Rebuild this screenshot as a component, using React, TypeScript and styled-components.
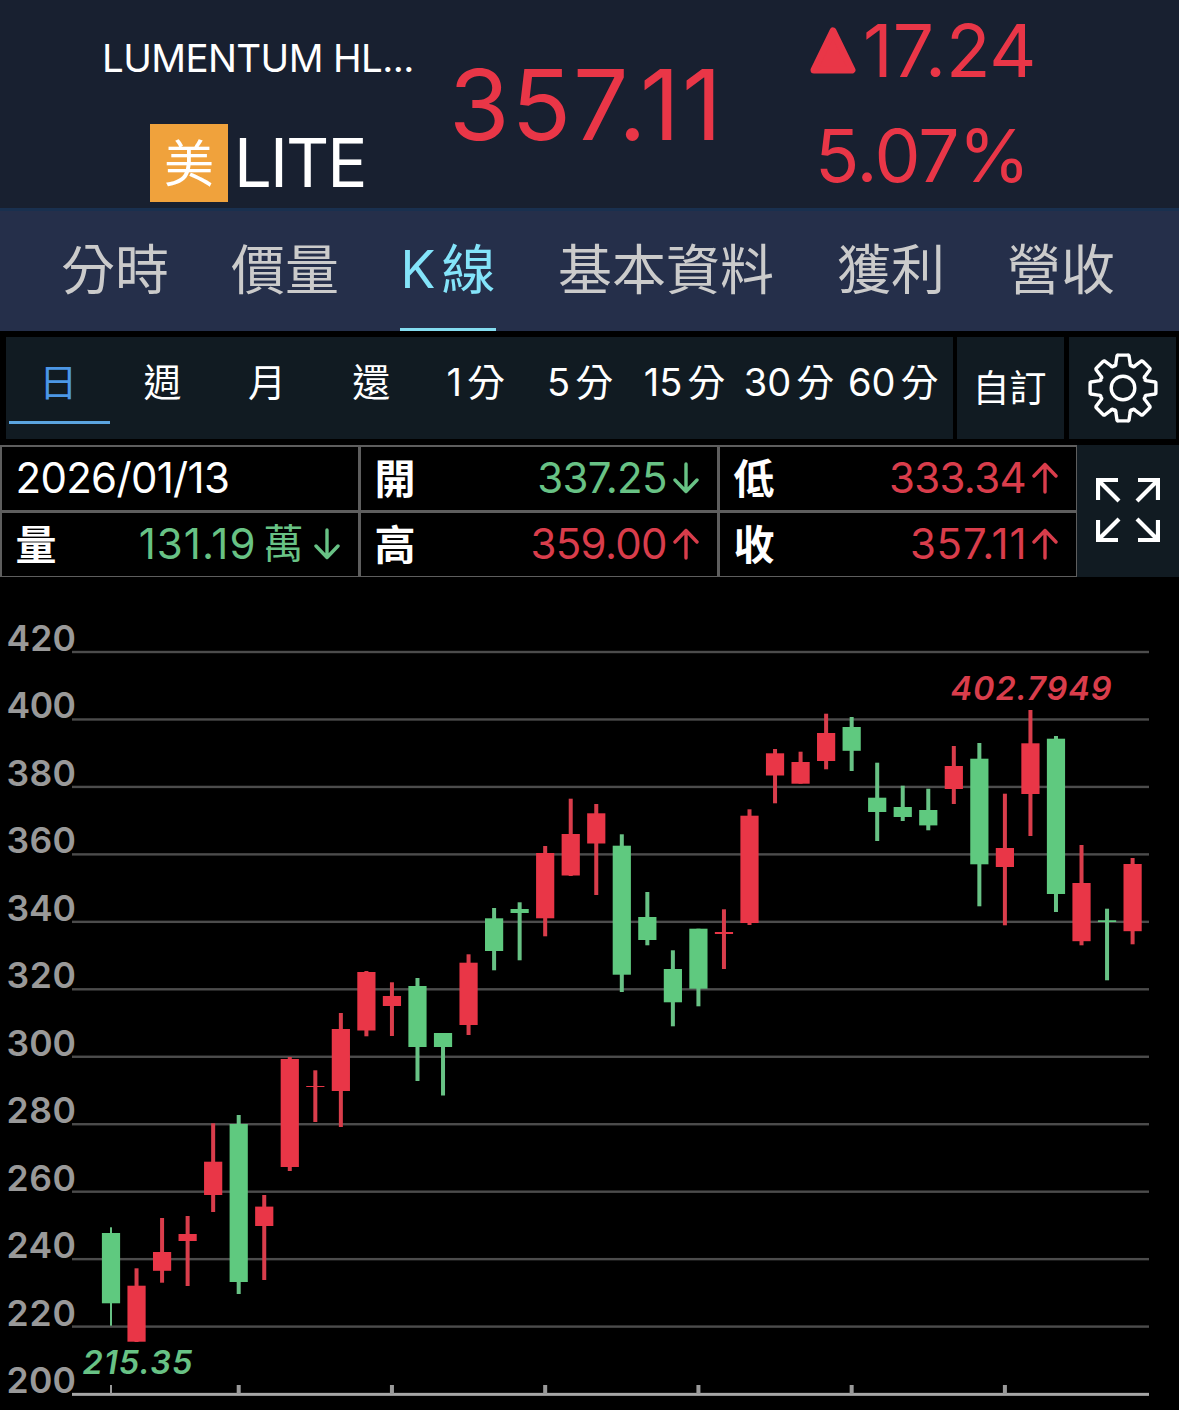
import React from "react";
import styled, { createGlobalStyle } from "styled-components";

const RED = "#e93647";
const GREEN = "#5fc97f";

const GlobalStyle = createGlobalStyle`
  html, body { margin: 0; padding: 0; background: #000; }
  * { box-sizing: border-box; }
  body {
    font-family: Inter, "Noto Sans CJK TC", sans-serif;
    color: #fff;
    overflow: hidden;
  }
`;

const Screen = styled.main`
  display: flex;
  flex-direction: column;
  width: 1179px;
  height: 1410px;
  background: #000;
`;

const Header = styled.header`
  display: grid;
  grid-template-columns: 430px 310px 1fr;
  height: 208px;
  background: #182030;
`;

const Identity = styled.div`
  display: flex;
  flex-direction: column;
  padding: 38px 0 0 102px;
`;

const CompanyName = styled.div`
  font-size: 38.5px;
  line-height: 41px;
  letter-spacing: -0.6px;
  white-space: nowrap;
`;

const TickerRow = styled.div`
  display: flex;
  align-items: center;
  gap: 6px;
  margin: 45px 0 0 48px;
`;

const MarketBadge = styled.span`
  display: flex;
  align-items: center;
  justify-content: center;
  width: 78px;
  height: 78px;
  background: #f0a23c;
  font-size: 50px;
  line-height: 76px;
  padding-top: 2px;
`;

const Ticker = styled.span`
  font-size: 67px;
  line-height: 78px;
  letter-spacing: -2px;
`;

const Price = styled.div`
  padding: 45px 0 0 19px;
  font-size: 98px;
  line-height: 119px;
  letter-spacing: 2px;
  color: ${RED};
  white-space: nowrap;
`;

const Change = styled.div`
  display: flex;
  flex-direction: column;
  gap: 25px;
  padding-top: 11px;
  color: ${RED};
`;

const ChangeLine = styled.div<{ $left: number; $track: number }>`
  display: flex;
  align-items: center;
  gap: 7px;
  padding-left: ${(p) => p.$left}px;
  font-size: 73px;
  line-height: 80px;
  letter-spacing: ${(p) => p.$track}px;
  white-space: nowrap;
`;

const Tabs = styled.nav`
  display: flex;
  gap: 62px;
  height: 123px;
  padding-left: 61px;
  border-top: 3px solid #19304f;
  background: #252f4a;
`;

const Tab = styled.a<{ $active?: boolean }>`
  flex: none;
  display: flex;
  justify-content: center;
  gap: 6px;
  width: ${(p) => (p.$active ? "96px" : "auto")};
  margin-left: ${(p) => (p.$active ? -1 : 0)}px;
  font-size: 54px;
  line-height: 120px;
  color: ${(p) => (p.$active ? "#84e4fa" : "#cbcbcb")};
  border-bottom: 3px solid ${(p) => (p.$active ? "#84dcf0" : "transparent")};

  &:nth-child(n + 5) {
    transform: translateX(1px);
  }
`;

const TabLatin = styled.span`
  font-size: 52px;
  line-height: 117px;
`;

const Toolbar = styled.div`
  display: grid;
  grid-template-columns: 951px 112px 107px;
  height: 114px;
  padding: 6px 3px 8px 6px;
`;

const Periods = styled.div`
  display: grid;
  grid-template-columns: repeat(9, 104.4px);
  width: 947px;
  background: #111b22;
  height: 102px;
`;

const Period = styled.a<{ $active?: boolean }>`
  display: flex;
  justify-content: center;
  gap: 5px;
  margin-left: 3px;
  padding-right: 3px;
  height: 87px;
  font-size: 38px;
  line-height: 91px;
  white-space: nowrap;
  color: ${(p) => (p.$active ? "#4c97e6" : "#fff")};
  border-bottom: 3px solid ${(p) => (p.$active ? "#5ba5e0" : "transparent")};
`;

const ToolButton = styled.button`
  display: flex;
  align-items: center;
  justify-content: center;
  width: 107px;
  height: 102px;
  padding: 0;
  border: 0;
  background: #111b22;
  color: #fff;
  font: 400 37px/104px Inter, "Noto Sans CJK TC", sans-serif;
`;

const CustomLabel = styled.span`
  padding: 2px 2px 0 0;
`;

const QuotePanel = styled.section`
  display: grid;
  grid-template-columns: 1077px 1fr;
  height: 132px;
`;

const QuoteGrid = styled.div`
  display: grid;
  grid-template-columns: repeat(3, 356px);
  grid-template-rows: repeat(2, 63px);
  gap: 3px;
  padding: 1.5px;
  background: #5e5e5e;
`;

const QuoteCell = styled.div`
  display: flex;
  align-items: center;
  justify-content: space-between;
  padding: 0 18px 0 14px;
  background: #000;
  font-size: 42px;
  line-height: 62px;
`;

const DateText = styled.span`
  letter-spacing: -0.7px;
`;

const CellLabel = styled.span`
  font-weight: 700;
  font-size: 41px;
  line-height: 62px;
  padding-top: 1px;
`;

const CellValue = styled.span<{ $up: boolean }>`
  display: flex;
  align-items: center;
  color: ${(p) => (p.$up ? "#d93d4b" : "#68c285")};
`;

const Amount = styled.span<{ $track: number }>`
  letter-spacing: ${(p) => p.$track}px;
  margin-right: ${(p) => 5 - p.$track}px;
`;

const Unit = styled.span`
  font-size: 40px;
  margin: 0 10px 0 3px;
`;

const ExpandButton = styled(ToolButton)`
  width: 102px;
  height: 132px;
  padding: 0 0 2px;
`;

const Chart = styled.svg`
  display: block;
  width: 1179px;
  height: 833px;
  font-family: Inter, sans-serif;
`;

const Arrow = ({ up }: { up: boolean }) => (
  <svg width="26" height="32" viewBox="0 0 26 32" fill="none" stroke="currentColor" strokeWidth="3.4" strokeLinecap="round" strokeLinejoin="round">
    {up ? <path d="M13 30V2.5M2 14L13 2.5L24 14" /> : <path d="M13 2V29.5M2 18L13 29.5L24 18" />}
  </svg>
);

const GEAR_TEETH = Array.from({ length: 8 }, (_, i) => i * 45);

const gearPath = () => {
  const pt = (r: number, deg: number) => {
    const a = ((deg - 90) * Math.PI) / 180;
    return `${(36 + r * Math.cos(a)).toFixed(2)} ${(36 + r * Math.sin(a)).toFixed(2)}`;
  };
  const parts = GEAR_TEETH.map(
    (d, i) =>
      `${i === 0 ? "M" : "L"}${pt(25.8, d - 16)} L${pt(32.8, d - 10.5)} Q${pt(33.6, d - 9.5)} ${pt(33.2, d - 8)} L${pt(33.2, d + 8)} Q${pt(33.6, d + 9.5)} ${pt(32.8, d + 10.5)} L${pt(25.8, d + 16)} Q${pt(22.6, d + 17.5)} ${pt(24, d + 22.5)} Q${pt(22.6, d + 27.5)} ${pt(25.8, d + 29)}`
  );
  return parts.join(" ") + "Z";
};

const GearIcon = () => (
  <svg width="72" height="72" viewBox="0 0 72 72" fill="none" stroke="#fff" strokeWidth="3.4" strokeLinejoin="round">
    <path d={gearPath()} />
    <circle cx="36" cy="36" r="11.8" />
  </svg>
);

const ExpandIcon = () => (
  <svg width="64" height="64" viewBox="0 0 64 64" fill="none" stroke="#fff" strokeWidth="4.2">
    <path d="M2 22V2H22M2 2L23 23" />
    <path d="M42 2H62V22M62 2L41 23" />
    <path d="M2 42V62H22M2 62L23 41" />
    <path d="M42 62H62V42M62 62L41 41" />
  </svg>
);

type Candle = [up: 0 | 1, high: number, top: number, bottom: number, low: number];

const candles: Candle[] = [
  [0, 1227.3, 1233, 1303.3, 1325.7],
  [1, 1268.3, 1285.7, 1341.7, 1342],
  [1, 1218, 1252, 1270.8, 1282.7],
  [1, 1216, 1234, 1241, 1286],
  [1, 1123.3, 1161.7, 1195, 1212],
  [0, 1115, 1124, 1282, 1294],
  [1, 1195, 1206.6, 1226, 1280],
  [1, 1057, 1059, 1167, 1171],
  [1, 1070.3, 1086, 1087, 1122],
  [1, 1013, 1029, 1091, 1127],
  [1, 971, 972, 1030.5, 1036.3],
  [1, 982.3, 996, 1006, 1036],
  [0, 978, 986, 1047, 1081],
  [0, 1033, 1033, 1047, 1095.5],
  [1, 954.3, 962.7, 1025, 1035],
  [0, 908, 918.3, 951, 970.3],
  [0, 902.3, 909, 913, 960.3],
  [1, 846, 853, 918.3, 936.3],
  [1, 798.7, 834, 875.5, 876],
  [1, 804, 813.3, 843.5, 895],
  [0, 834.3, 845.7, 974.7, 992],
  [0, 892, 917, 940, 945.3],
  [0, 950.3, 969, 1002.3, 1026.3],
  [0, 928.7, 928.7, 988.7, 1006.3],
  [1, 909.3, 932, 934, 969],
  [1, 809.3, 815.7, 923, 925],
  [1, 749, 753.3, 775.5, 803.3],
  [1, 751.7, 762, 783.7, 783.7],
  [1, 713.7, 733, 761, 769.3],
  [0, 717, 727, 750.8, 771],
  [0, 762.7, 797.7, 812, 841],
  [0, 785.7, 807, 817, 821],
  [0, 788.7, 810, 825.4, 830.3],
  [1, 746, 766, 789, 804],
  [0, 743, 758.7, 864.3, 906.3],
  [1, 793.7, 848, 867, 925.3],
  [1, 710, 743.3, 794, 836],
  [0, 736, 738.7, 894, 912],
  [1, 845, 883, 941.2, 945.3],
  [0, 908.7, 920.3, 922, 980.3],
  [1, 858, 864, 931.2, 944.3],
];

const levels = [420, 400, 380, 360, 340, 320, 300, 280, 260, 240, 220, 200];
const tickIndexes = [0, 5, 11, 17, 23, 29, 35];
const candleX = (i: number) => 111 + i * 25.54;
const levelY = (i: number) => 652 + i * 67.46;

const CandleChart = () => (
  <Chart viewBox="0 577 1179 833">
    {levels.map((v, i) => (
      <g key={v}>
        <rect x="72" y={levelY(i) - 1.2} width="1077" height={v === 200 ? 3 : 2.4} fill={v === 200 ? "#a6a6a6" : "#4c4c4c"} />
        <text x="6.5" y={levelY(i) - 1} fontSize="35.5" fontWeight="560" fill="#999" textLength="69.5" lengthAdjust="spacing">
          {v}
        </text>
      </g>
    ))}
    {tickIndexes.map((t) => (
      <rect key={t} x={candleX(t) - (t ? 2 : 1)} y="1385" width={t ? 4 : 2} height="9" fill="#999" />
    ))}
    {candles.map(([up, high, top, bottom, low], i) => (
      <g key={i}>
        <rect x={candleX(i) - (i ? 2 : 1)} y={high} width={i ? 4 : 2} height={low - high} fill={up ? "#d93d4b" : "#68c285"} />
        <rect x={candleX(i) - 9.1} y={top} width="18.2" height={bottom - top} fill={up ? RED : GREEN} />
      </g>
    ))}
    <text x="950.5" y="700" fontSize="32.5" fontWeight="560" fontStyle="italic" fill="#d93d4b" textLength="161">
      402.7949
    </text>
    <text x="82.5" y="1374" fontSize="32.5" fontWeight="560" fontStyle="italic" fill="#68c285" textLength="110">
      215.35
    </text>
  </Chart>
);

const tabs = ["分時", "價量", "K 線", "基本資料", "獲利", "營收"];
const periods = ["日", "週", "月", "還", "1 分", "5 分", "15 分", "30 分", "60 分"];

const quotes: { label: string; value?: string; unit?: string; up?: boolean; track?: number }[] = [
  { label: "2026/01/13" },
  { label: "開", value: "337.25", up: false, track: -0.7 },
  { label: "低", value: "333.34", up: true, track: -0.7 },
  { label: "量", value: "131.19", unit: "萬", up: false, track: 1 },
  { label: "高", value: "359.00", up: true, track: -0.7 },
  { label: "收", value: "357.11", up: true, track: 0.8 },
];

export default function App() {
  return (
    <Screen>
      <GlobalStyle />
      <Header>
        <Identity>
          <CompanyName>LUMENTUM HL...</CompanyName>
          <TickerRow>
            <MarketBadge>美</MarketBadge>
            <Ticker>LITE</Ticker>
          </TickerRow>
        </Identity>
        <Price>357.11</Price>
        <Change>
          <ChangeLine $left={70} $track={0}>
            <svg width="46" height="48" viewBox="0 0 46 48">
              <path d="M23 4L42 43H4Z" fill={RED} stroke={RED} strokeWidth="7" strokeLinejoin="round" />
            </svg>
            17.24
          </ChangeLine>
          <ChangeLine $left={75} $track={-1}>5.07%</ChangeLine>
        </Change>
      </Header>
      <Tabs>
        {tabs.map((t) => (
          <Tab key={t} $active={t === "K 線"}>
            {t.split(" ").map((part) =>
              part === "K" ? <TabLatin key={part}>{part}</TabLatin> : <span key={part}>{part}</span>
            )}
          </Tab>
        ))}
      </Tabs>
      <Toolbar>
        <Periods>
          {periods.map((p, i) => (
            <Period key={p} $active={i === 0}>
              {p.split(" ").map((part) => (
                <span key={part}>{part}</span>
              ))}
            </Period>
          ))}
        </Periods>
        <ToolButton>
          <CustomLabel>自訂</CustomLabel>
        </ToolButton>
        <ToolButton aria-label="設定">
          <GearIcon />
        </ToolButton>
      </Toolbar>
      <QuotePanel>
        <QuoteGrid>
          {quotes.map((q) => (
            <QuoteCell key={q.label}>
              {q.value ? <CellLabel>{q.label}</CellLabel> : <DateText>{q.label}</DateText>}
              {q.value && (
                <CellValue $up={!!q.up}>
                  <Amount $track={q.track ?? 0}>{q.value}</Amount>
                  {q.unit && <Unit>{q.unit}</Unit>}
                  <Arrow up={!!q.up} />
                </CellValue>
              )}
            </QuoteCell>
          ))}
        </QuoteGrid>
        <ExpandButton aria-label="全螢幕">
          <ExpandIcon />
        </ExpandButton>
      </QuotePanel>
      <CandleChart />
    </Screen>
  );
}
